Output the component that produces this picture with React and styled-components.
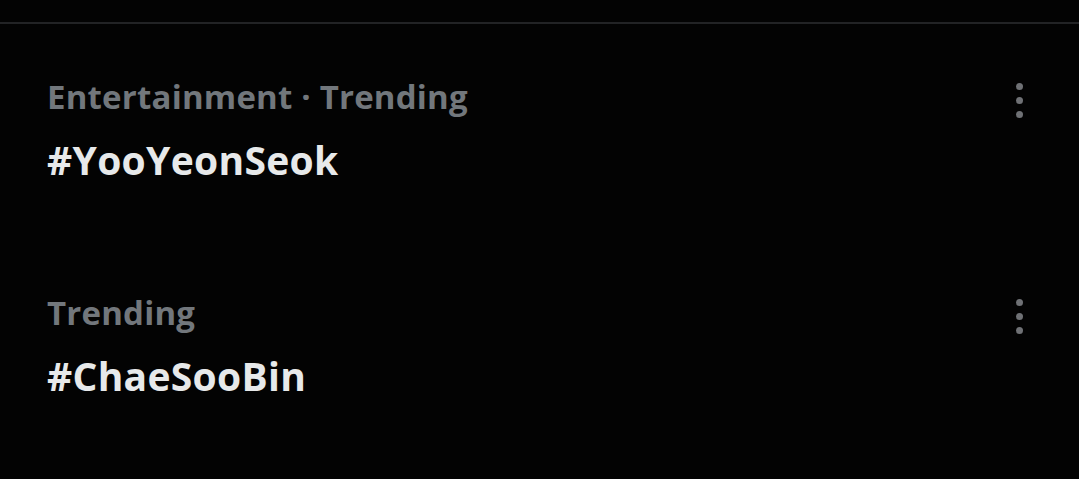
import styled, { createGlobalStyle } from "styled-components";

const GlobalStyle = createGlobalStyle`
  html, body {
    margin: 0;
    padding: 0;
    background: #030303;
  }
`;

const Page = styled.div`
  width: 100%;
  min-height: 479px;
  background: #030303;
  padding-top: 22px;
  font-family: "Open Sans", "Noto Sans", sans-serif;
`;

const Divider = styled.div`
  height: 2px;
  background: #222325;
`;

const TrendRow = styled.div`
  height: 216px;
  box-sizing: border-box;
  padding: 51px 56px 0 47px;
  display: flex;
  justify-content: space-between;
  align-items: flex-start;
`;

const TrendInfo = styled.div`
  display: flex;
  flex-direction: column;
  gap: 17px;
`;

const Category = styled.div`
  font-size: 33px;
  line-height: 44px;
  font-weight: 700;
  letter-spacing: 0.2px;
  color: #72777c;
`;

const Hashtag = styled.div`
  font-size: 39px;
  line-height: 48px;
  font-weight: 700;
  letter-spacing: 0.3px;
  color: #e7e9ea;
`;

const MoreButton = styled.button`
  margin-top: 8px;
  padding: 0;
  border: none;
  background: none;
  display: flex;
  cursor: pointer;
`;

function MoreIcon() {
  return (
    <svg width="7" height="35" viewBox="0 0 7 35">
      <circle cx="3.5" cy="3.5" r="3.5" fill="#6f7175" />
      <circle cx="3.5" cy="17.5" r="3.5" fill="#6f7175" />
      <circle cx="3.5" cy="31.5" r="3.5" fill="#6f7175" />
    </svg>
  );
}

const trends = [
  { category: "Entertainment · Trending", tag: "#YooYeonSeok" },
  { category: "Trending", tag: "#ChaeSooBin" },
];

function App() {
  return (
    <Page>
      <GlobalStyle />
      <Divider />
      {trends.map((t) => (
        <TrendRow key={t.tag}>
          <TrendInfo>
            <Category>{t.category}</Category>
            <Hashtag>{t.tag}</Hashtag>
          </TrendInfo>
          <MoreButton aria-label="More">
            <MoreIcon />
          </MoreButton>
        </TrendRow>
      ))}
    </Page>
  );
}

export default App;
